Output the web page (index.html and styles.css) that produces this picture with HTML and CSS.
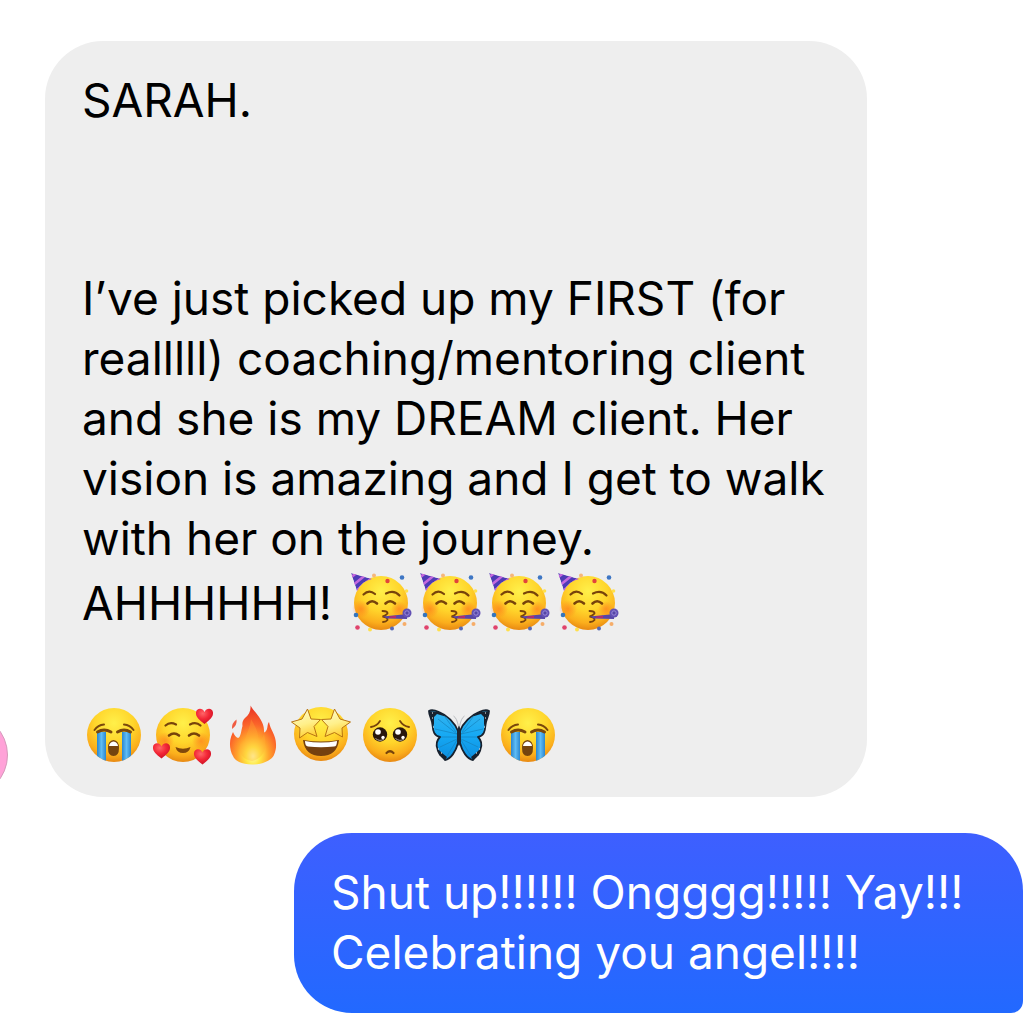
FILE: index.html
```html
<!DOCTYPE html>
<html lang="en">
<head>
    <meta charset="UTF-8">
    <meta name="viewport" content="width=device-width, initial-scale=1.0">
    <title>Messages</title>
    <link rel="stylesheet" href="styles.css">
</head>
<body>
    <!-- emoji shapes -->
    <svg class="defs" aria-hidden="true">
        <defs>
            <radialGradient id="skin" cx="50%" cy="28%" r="72%">
                <stop offset="0" stop-color="#fff04a"/>
                <stop offset="0.5" stop-color="#ffd52b"/>
                <stop offset="0.82" stop-color="#fbae1c"/>
                <stop offset="1" stop-color="#e88912"/>
            </radialGradient>
            <radialGradient id="blush">
                <stop offset="0" stop-color="#ff7b1c" stop-opacity="0.65"/>
                <stop offset="1" stop-color="#ff7b1c" stop-opacity="0"/>
            </radialGradient>
            <linearGradient id="tear" x1="0" x2="1" y1="0" y2="0">
                <stop offset="0" stop-color="#2a86cf"/>
                <stop offset="0.5" stop-color="#5fbcf5"/>
                <stop offset="1" stop-color="#2a86cf"/>
            </linearGradient>
            <radialGradient id="love" cx="40%" cy="30%" r="75%">
                <stop offset="0" stop-color="#ff6668"/>
                <stop offset="0.5" stop-color="#f32736"/>
                <stop offset="1" stop-color="#c80e23"/>
            </radialGradient>
            <radialGradient id="flame" cx="50%" cy="86%" r="78%">
                <stop offset="0" stop-color="#fffcb0"/>
                <stop offset="0.2" stop-color="#ffe845"/>
                <stop offset="0.45" stop-color="#ffa12b"/>
                <stop offset="0.7" stop-color="#fb642a"/>
                <stop offset="1" stop-color="#ec3b25"/>
            </radialGradient>
            <linearGradient id="star" x1="0" x2="0.3" y1="0" y2="1">
                <stop offset="0" stop-color="#fffbd0"/>
                <stop offset="0.6" stop-color="#fff08a"/>
                <stop offset="1" stop-color="#ffd23c"/>
            </linearGradient>
            <linearGradient id="wing" x1="0" x2="0" y1="0" y2="1">
                <stop offset="0" stop-color="#35b5ef"/>
                <stop offset="0.5" stop-color="#16a9f4"/>
                <stop offset="1" stop-color="#0c8ee0"/>
            </linearGradient>
            <clipPath id="face-clip"><circle cx="32" cy="32" r="27"/></clipPath>
            <clipPath id="hat-clip"><path d="M2 2 L23 8 Q13 10 8 20 Z"/></clipPath>

            <path id="heart" d="M0 8 C-5 4 -9 1 -8.500 -3.500 C-8 -8 -2 -8.500 0 -4 C2 -8.500 8 -8 8.500 -3.500 C9 1 5 4 0 8 Z" fill="url(#love)"/>

            <symbol id="party" viewBox="0 0 64 64">
                <circle cx="32" cy="32" r="27" fill="url(#skin)"/>
                <circle cx="12" cy="38" r="9" fill="url(#blush)"/>
                <circle cx="50" cy="38" r="8" fill="url(#blush)"/>
                <g clip-path="url(#hat-clip)">
                    <path d="M2 2 L23 8 Q13 10 8 20 Z" fill="#4d3bb5"/>
                    <path d="M0 8 L10 0 M3 15 L19 2 M7 20 L24 6" stroke="#c468dd" stroke-width="2.600"/>
                </g>
                <g fill="none" stroke="#77430b" stroke-linecap="round">
                    <path d="M14.500 23.500 Q20 18 26 23" stroke-width="2.200"/>
                    <path d="M37 22.500 Q45 18.500 50.500 24.500" stroke-width="2.200"/>
                    <path d="M18.500 32.500 Q23 28 28 32.500" stroke-width="2.600"/>
                    <path d="M36.500 32.500 Q41 28 46 32.500" stroke-width="2.600"/>
                    <path d="M33.500 40 Q39 40 38.500 42.500 Q37 44.500 33.500 45.500 Q39 46.500 38.500 49 Q37 51 34 51" stroke-width="1.800"/>
                </g>
                <path d="M34 45.500 L54 43.500 Q59 44 58 48 L38 47.500 Z" fill="#5746a8"/>
                <path d="M40 45.500 L47 44.800 L47 47 L40 46.800 Z" fill="#b92b6c"/>
                <circle cx="58" cy="42" r="4.500" fill="#6250b4"/>
                <circle cx="58" cy="42" r="2.200" fill="#5646a5" stroke="#9a8adb"/>
                <circle cx="25" cy="4.500" r="2" fill="#f6b779"/>
                <circle cx="38.500" cy="10" r="2.200" fill="#e2433c"/>
                <circle cx="53" cy="6.500" r="2.300" fill="#3e76c4"/>
                <circle cx="57.500" cy="20" r="1.800" fill="#ffe04a"/>
                <circle cx="7" cy="44" r="2.300" fill="#3575bd"/>
                <circle cx="8.500" cy="56.500" r="2.300" fill="#e0436c"/>
                <circle cx="21" cy="58.500" r="2" fill="#ffe04a"/>
                <circle cx="43" cy="57.500" r="2" fill="#5668b5"/>
                <circle cx="55.500" cy="53" r="2" fill="#f6ad69"/>
            </symbol>

            <symbol id="sob" viewBox="0 0 64 64">
                <circle cx="32" cy="32" r="27" fill="url(#skin)"/>
                <g clip-path="url(#face-clip)">
                    <rect x="15" y="29" width="9" height="30" fill="url(#tear)"/>
                    <rect x="40" y="29" width="9" height="30" fill="url(#tear)"/>
                </g>
                <g fill="none" stroke="#7a480c" stroke-linecap="round">
                    <path d="M12.500 27 Q16 22 22 21.500" stroke-width="2"/>
                    <path d="M42 21.500 Q48 22 51.500 27" stroke-width="2"/>
                    <path d="M15.500 29 Q22 25 29 29" stroke-width="3"/>
                    <path d="M35.500 29 Q42 25 48.500 29" stroke-width="3"/>
                </g>
                <path d="M31.500 37 Q37 37.500 37 45 Q37 53 31.500 53 Q26 53 26 45 Q26 37.500 31.500 37 Z" fill="#75440f"/>
                <path d="M31.500 38.500 Q35.500 39 36 43 H27 Q27.500 39 31.500 38.500 Z" fill="#fff"/>
            </symbol>

            <symbol id="hearts" viewBox="0 0 64 64">
                <circle cx="32" cy="32" r="27" fill="url(#skin)"/>
                <circle cx="14" cy="38" r="9" fill="url(#blush)"/>
                <circle cx="50" cy="38" r="9" fill="url(#blush)"/>
                <g fill="none" stroke="#77430b" stroke-linecap="round">
                    <path d="M14.500 22.500 Q19 18.500 25 21.500" stroke-width="2.200"/>
                    <path d="M39 21.500 Q45 18.500 49.500 22.500" stroke-width="2.200"/>
                    <path d="M18 32.500 Q23 28.500 28 32.500" stroke-width="2.600"/>
                    <path d="M38 32.500 Q43 28.500 48 32.500" stroke-width="2.600"/>
                </g>
                <path d="M24.500 44 Q32 47.500 39.500 44 Q38 50 32 50 Q26 50 24.500 44 Z" fill="#80480b"/>
                <use href="#heart" x="53.500" y="13"/>
                <use href="#heart" x="10.500" y="47.500"/>
                <use href="#heart" x="51.500" y="53.500"/>
            </symbol>

            <symbol id="fire" viewBox="0 0 64 64">
                <path d="M30.500 2.500 C34 9 44 17 44 27 C44 30 44.500 30 46 28 C48 26 47 21 49 19 C50 26 56 32 56 41 C56 43 56.500 46 54 52 C51 58 42 61.500 32 61.500 C22 61.500 15 58 13 53 C10 48 9 40 11 34 Q12 31 13 29 Q15 34 18 35 C21 34 21 28 22.500 23 C22 19 23 17 25 15 C29 12 31 8 30.500 2.500 Z" fill="url(#flame)"/>
                <path d="M16.500 16.500 Q17.500 22 12 26 Q11.500 20 16.500 16.500 Z" fill="#f05b40"/>
                <path d="M31 16 C37 26 39 32 38 39 C42 36 43 34 44 31 C47 41 46 55 32 58 C21 56 19 49 20 41 C22 42 24 40 25 37 C27 29 30 25 31 16 Z" fill="#ffae35" opacity="0.3"/>
            </symbol>

            <symbol id="starstruck" viewBox="0 0 64 64">
                <circle cx="32" cy="31" r="27" fill="url(#skin)"/>
                <path d="M14 37 Q32 40 50 37 Q48 53 32 53 Q16 53 14 37 Z" fill="#75400f"/>
                <path d="M16 38 Q32 41 48 38 Q48 43.500 45 43.500 Q32 45 19 43.500 Q16 43 16 38 Z" fill="#fff"/>
                <g fill="url(#star)" stroke="#b87413" stroke-width="1" stroke-linejoin="round">
                    <path d="M18.500 6 L22 16 L31.500 16.500 L25 23.500 L28 33.500 L18.500 29.500 L10.500 35 L11 25 L2.500 19 L13 16 Z"/>
                    <path d="M45.500 6 L51 16 L61.500 19 L53 25 L53.500 34 L45.500 29.500 L36 33.500 L39 23.500 L32.500 16.500 L42 16 Z"/>
                </g>
            </symbol>

            <symbol id="pleading" viewBox="0 0 64 64">
                <circle cx="32" cy="32" r="27" fill="url(#skin)"/>
                <g fill="none" stroke="#77430b" stroke-linecap="round">
                    <path d="M13 24 Q19 23 22 18" stroke-width="1.800"/>
                    <path d="M42 18 Q45 23 51 24" stroke-width="1.800"/>
                    <path d="M28.500 50 Q32 46.500 35.500 50" stroke-width="2.200"/>
                </g>
                <g fill="#28170d">
                    <circle cx="22" cy="31.500" r="7.200"/>
                    <circle cx="42" cy="31.500" r="7.200"/>
                </g>
                <g fill="#fff">
                    <circle cx="20" cy="29" r="2.800"/>
                    <circle cx="40" cy="29" r="2.800"/>
                    <circle cx="25" cy="34.500" r="1.700"/>
                    <circle cx="45" cy="34.500" r="1.700"/>
                </g>
                <path d="M17.500 35.500 Q22 39 26 36 M37.500 35.500 Q42 39 46 36" fill="none" stroke="#b4a8a0" stroke-width="1"/>
            </symbol>

            <symbol id="butterfly" viewBox="0 0 64 64">
                <path d="M31.500 24 Q30 15 26.500 13 M32.500 24 Q34 15 37.500 13" fill="none" stroke="#b9bcc0" stroke-width="1"/>
                <g id="wing-left">
                    <path d="M31 28 C28 20 20 12 12 9 Q5 6 2 8 C2 13 5 16 5.500 22 C6 28 7 33 13 34 C9 38 9 42 10.500 46 C11 51 15 53 18 57 C24 56 29 48 31 40 Z" fill="url(#wing)" stroke="#17212e" stroke-width="1.800" stroke-linejoin="round"/>
                    <path d="M2 8 L12 9 L20 14 L10 11 L7 14 L7 23 L5 19 Z M11 46 L15 50 L20 54 L18 57 L12 52 Z" fill="#17212e"/>
                    <path d="M30 31 L11 16 M30 31 L8 26 M30 34 L14 34 M30 36 L13 44 M30 37 L20 53 M29 29 L18 14" stroke="#1683bd" stroke-width="0.700"/>
                    <path d="M5 10 h1 M5 15 h1 M6 24 h1 M11 46 h1 M14 50 h1" stroke="#fff" stroke-width="1"/>
                </g>
                <use href="#wing-left" transform="matrix(-1 0 0 1 64 0)"/>
                <ellipse cx="32" cy="33" rx="1.800" ry="10" fill="#202833"/>
            </symbol>
        </defs>
    </svg>

    <main class="chat">
        <div class="row received">
            <div class="avatar"></div>
            <div class="bubble grey">
                <p class="name">SARAH.</p>
                <p>I’ve just picked up my FIRST (for<br>
                realllll) coaching/mentoring client<br>
                and she is my DREAM client. Her<br>
                vision is amazing and I get to walk<br>
                with her on the journey.</p>
                <p class="line">
                    <span class="shout">AHHHHHH!</span>
                    <svg class="emoji" role="img" aria-label="Partying face"><use href="#party"/></svg>
                    <svg class="emoji" role="img" aria-label="Partying face"><use href="#party"/></svg>
                    <svg class="emoji" role="img" aria-label="Partying face"><use href="#party"/></svg>
                    <svg class="emoji" role="img" aria-label="Partying face"><use href="#party"/></svg>
                </p>
                <p class="line last">
                    <svg class="emoji" role="img" aria-label="Loudly crying face"><use href="#sob"/></svg>
                    <svg class="emoji" role="img" aria-label="Smiling face with hearts"><use href="#hearts"/></svg>
                    <svg class="emoji" role="img" aria-label="Fire"><use href="#fire"/></svg>
                    <svg class="emoji" role="img" aria-label="Star-struck"><use href="#starstruck"/></svg>
                    <svg class="emoji" role="img" aria-label="Pleading face"><use href="#pleading"/></svg>
                    <svg class="emoji" role="img" aria-label="Butterfly"><use href="#butterfly"/></svg>
                    <svg class="emoji" role="img" aria-label="Loudly crying face"><use href="#sob"/></svg>
                </p>
            </div>
        </div>

        <div class="row sent">
            <div class="bubble blue">
                <p>Shut up!!!!!! Ongggg!!!!! Yay!!!<br>
                Celebrating you angel!!!!</p>
            </div>
        </div>
    </main>
</body>
</html>
```
FILE: styles.css
```css
body {
    margin: 0;
    background-color: #fff;
    color: #000;
    font-family: Inter, "Liberation Sans", sans-serif;
    font-size: 46px;
    line-height: 60px;
    overflow-x: hidden;
}
p {
    margin: 0;
    white-space: nowrap;
}
.defs {
    position: absolute;
    width: 0;
    height: 0;
}
.chat {
    display: flex;
    flex-direction: column;
    gap: 36px;
    padding-top: 41px;
}
.row {
    display: flex;
    align-items: flex-end;
}
.received {
    gap: 37px;
    padding-right: 163px;
}
.sent {
    padding-left: 294px;
    padding-right: 7px;
}
.avatar {
    flex: none;
    width: 84px;
    height: 84px;
    margin-left: -76px;
    box-sizing: border-box;
    border: 1px solid #d59abb;
    border-radius: 50%;
    background-color: #ffa2d8;
}
.bubble {
    flex: 1;
    padding: 29px 37px;
    border-radius: 58px;
}
.grey {
    background-color: #eee;
}
.blue {
    padding-bottom: 31px;
    border-radius: 58px 58px 12px 58px;
    background: linear-gradient(#3e5fff, #2269ff);
    color: #fff;
}
.name {
    margin-bottom: 138px;
}
.line {
    display: flex;
    align-items: center;
    gap: 5px;
    height: 70px;
}
.last {
    height: 66px;
    margin-top: 64px;
}
.shout {
    margin-right: 12px;
}
.emoji {
    width: 64px;
    height: 64px;
}
```
